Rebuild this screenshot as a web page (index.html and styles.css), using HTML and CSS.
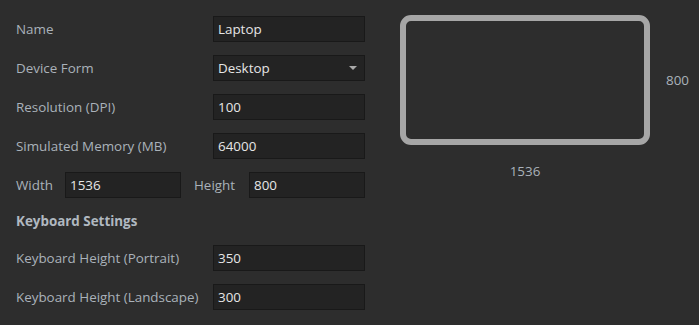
FILE: index.html
```html
<!DOCTYPE html>
<html lang="en">
<head>
  <meta charset="UTF-8">
  <meta name="viewport" content="width=device-width, initial-scale=1.0">
  <title>Device Settings</title>
  <link rel="stylesheet" href="styles.css">
</head>
<body>
  <div class="page">
    <div class="form">
      <div class="field">
        <label class="label">Name</label>
        <input class="input" type="text" value="Laptop">
      </div>
      <div class="field">
        <label class="label">Device Form</label>
        <div class="input select">
          <span>Desktop</span>
          <svg class="caret" width="8" height="4" viewBox="0 0 8 4"><path d="M0 0 H8 L4 4 Z" fill="#a9a9a9"/></svg>
        </div>
      </div>
      <div class="field">
        <label class="label">Resolution (DPI)</label>
        <input class="input" type="text" value="100">
      </div>
      <div class="field">
        <label class="label">Simulated Memory (MB)</label>
        <input class="input" type="text" value="64000">
      </div>
      <div class="field size">
        <label class="label width-label">Width</label>
        <input class="input" type="text" value="1536">
        <label class="label height-label">Height</label>
        <input class="input" type="text" value="800">
      </div>
      <div class="section-title">Keyboard Settings</div>
      <div class="field">
        <label class="label">Keyboard Height (Portrait)</label>
        <input class="input" type="text" value="350">
      </div>
      <div class="field">
        <label class="label">Keyboard Height (Landscape)</label>
        <input class="input" type="text" value="300">
      </div>
    </div>

    <div class="preview">
      <div class="screen"></div>
      <div class="dim dim-h">800</div>
      <div class="dim dim-w">1536</div>
    </div>
  </div>
</body>
</html>
```

FILE: styles.css
```css
/* Global Styles */
body {
  margin: 0;
  padding: 0;
  background: #2d2d2d;
  font-family: 'Open Sans', sans-serif;
  font-size: 13.4px;
  color: #aab2ba;
  height: 100vh;
  overflow: hidden;
}

.page {
  display: flex;
  align-items: flex-start;
  padding: 16px 0 0 16px;
}

/* Form */
.form {
  width: 349px;
  display: flex;
  flex-direction: column;
  gap: 13px;
}

.field {
  display: flex;
  align-items: center;
  height: 26px;
}

.label {
  width: 197px;
  flex-shrink: 0;
  white-space: nowrap;
}

.input {
  flex: 1;
  min-width: 0;
  box-sizing: border-box;
  height: 26px;
  margin: 0;
  padding: 0 4px;
  background: #232323;
  border: 1px solid #191919;
  color: #e6e6e6;
  font-family: inherit;
  font-size: 13.4px;
  outline: none;
}

.select {
  display: flex;
  align-items: center;
  justify-content: space-between;
  padding-right: 7px;
}

.size .input {
  flex: 0 0 116px;
}

.size .width-label {
  width: 49px;
}

.size .height-label {
  width: 55px;
  margin-left: 13px;
}

.section-title {
  height: 21px;
  line-height: 21px;
  font-weight: bold;
  color: #b0b8c0;
}

/* Preview */
.preview {
  margin-left: 35px;
  margin-top: -1px;
  display: grid;
  grid-template-columns: 250px auto;
  align-items: center;
}

.screen {
  width: 250px;
  height: 130px;
  box-sizing: border-box;
  border: 6px solid #a6a6a6;
  border-radius: 11px;
}

.dim {
  color: #aab2ba;
}

.dim-h {
  margin-left: 16px;
}

.dim-w {
  text-align: center;
  margin-top: 17px;
}
```
